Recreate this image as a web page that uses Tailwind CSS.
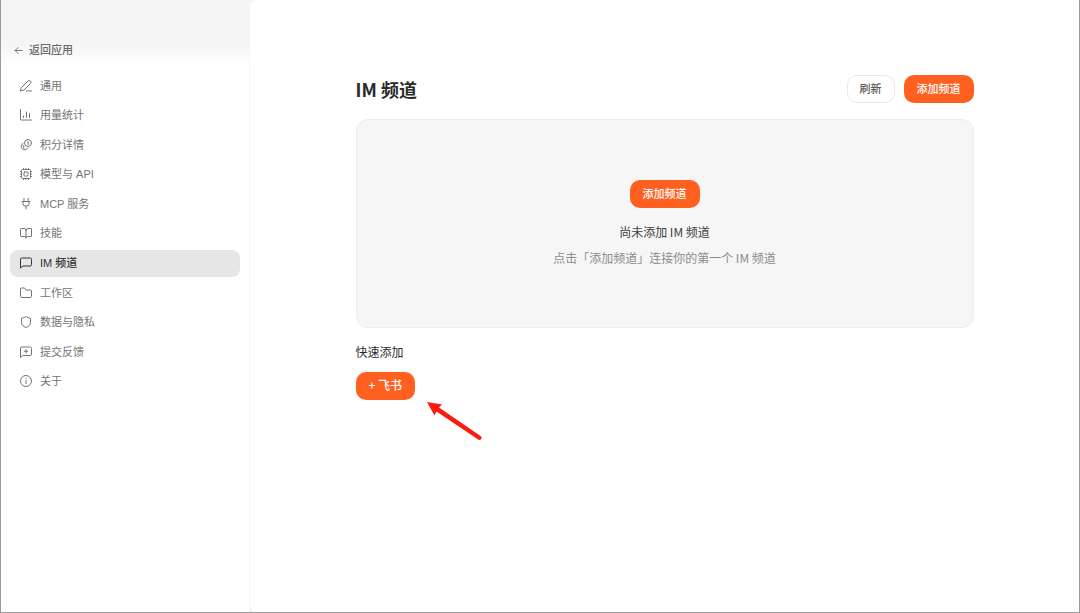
<!DOCTYPE html>
<html lang="zh-CN">
<head>
    <meta charset="UTF-8">
    <meta name="viewport" content="width=device-width, initial-scale=1.0">
    <title>IM 频道</title>
    <script src="https://cdn.jsdelivr.net/npm/@tailwindcss/browser@4"></script>
</head>
<body class="font-['Noto_Sans_CJK_SC',sans-serif] text-[#2b2b2b]">
    <div class="flex min-h-screen border-x border-b border-[#9b9b9b] bg-[#f5f5f5]">
        <aside class="w-[248px] shrink-0 bg-white bg-linear-to-b from-[#f5f5f5] from-[44px] to-white to-[66px] px-[9px] pt-10 font-['Liberation_Sans','Noto_Sans_CJK_SC',sans-serif] text-[11px] leading-4 text-[#757575]">
            <a href="#" class="flex h-5 items-center gap-1.5 pl-1 font-medium text-[#6b6b6b]">
                <svg class="size-[9px]" viewBox="0 0 24 24" fill="none" stroke="currentColor" stroke-width="2.4" stroke-linecap="round" stroke-linejoin="round"><path d="M22 12H3M11 4l-8 8 8 8"/></svg>
                返回应用
            </a>

            <nav class="mt-3 flex h-[323px] flex-col justify-between">
                <a href="#" class="flex h-[27px] items-center gap-2 rounded-lg px-2.5">
                    <svg class="size-3" viewBox="0 0 24 24" fill="none" stroke="currentColor" stroke-width="2" stroke-linecap="round" stroke-linejoin="round"><path d="M3 15 16 2a3.500 3.500 0 0 1 5 5L8 20l-7 2zM13 22h10"/></svg>
                    通用
                </a>
                <a href="#" class="flex h-[27px] items-center gap-2 rounded-lg px-2.5">
                    <svg class="size-3" viewBox="0 0 24 24" fill="none" stroke="currentColor" stroke-width="2" stroke-linecap="round" stroke-linejoin="round"><path d="M1 1v20a1 1 0 0 0 1 1h21M7 17v-3M13 17V6M19 17v-8"/></svg>
                    用量统计
                </a>
                <a href="#" class="flex h-[27px] items-center gap-2 rounded-lg px-2.5">
                    <svg class="size-3" viewBox="0 0 24 24" fill="none" stroke="currentColor" stroke-width="2" stroke-linecap="round" stroke-linejoin="round"><circle cx="16" cy="8" r="7"/><path d="M6 8.500A7 7 0 1 0 15.500 18M15 6h1.500v5M6 13.500h1.500v5"/></svg>
                    积分详情
                </a>
                <a href="#" class="flex h-[27px] items-center gap-2 rounded-lg px-2.5">
                    <svg class="size-3" viewBox="0 0 24 24" fill="none" stroke="currentColor" stroke-width="2" stroke-linecap="round" stroke-linejoin="round"><rect x="3" y="3" width="18" height="18" rx="2"/><rect x="8" y="8" width="8" height="8" rx="1"/><path d="M7 1v2M12 1v2M17 1v2M7 21v2M12 21v2M17 21v2M1 7h2M1 12h2M1 17h2M21 7h2M21 12h2M21 17h2"/></svg>
                    模型与 API
                </a>
                <a href="#" class="flex h-[27px] items-center gap-2 rounded-lg px-2.5">
                    <svg class="size-3" viewBox="0 0 24 24" fill="none" stroke="currentColor" stroke-width="2" stroke-linecap="round" stroke-linejoin="round"><path d="M8 1v6M16 1v6M4 7h16M6 7v5a4 4 0 0 0 4 4h4a4 4 0 0 0 4-4V7M12 16v6"/></svg>
                    MCP 服务
                </a>
                <a href="#" class="flex h-[27px] items-center gap-2 rounded-lg px-2.5">
                    <svg class="size-3" viewBox="0 0 24 24" fill="none" stroke="currentColor" stroke-width="2" stroke-linecap="round" stroke-linejoin="round"><path d="M12 6v16M1 4a1 1 0 0 1 1-1h6a4 4 0 0 1 4 4 4 4 0 0 1 4-4h6a1 1 0 0 1 1 1v14a1 1 0 0 1-1 1h-7a3 3 0 0 0-3 3 3 3 0 0 0-3-3H2a1 1 0 0 1-1-1z"/></svg>
                    技能
                </a>
                <a href="#" aria-current="page" class="flex h-[27px] items-center gap-2 rounded-lg bg-[#e6e6e6] px-2.5 font-medium text-[#333]">
                    <svg class="size-3" viewBox="0 0 24 24" fill="none" stroke="currentColor" stroke-width="2" stroke-linecap="round" stroke-linejoin="round"><path d="M23 16a2 2 0 0 1-2 2H6l-5 4V4a2 2 0 0 1 2-2h18a2 2 0 0 1 2 2z"/></svg>
                    IM 频道
                </a>
                <a href="#" class="flex h-[27px] items-center gap-2 rounded-lg px-2.5">
                    <svg class="size-3" viewBox="0 0 24 24" fill="none" stroke="currentColor" stroke-width="2" stroke-linecap="round" stroke-linejoin="round"><path d="M21 21a2 2 0 0 0 2-2V8a2 2 0 0 0-2-2h-9l-3-4H3a2 2 0 0 0-2 2v15a2 2 0 0 0 2 2z"/></svg>
                    工作区
                </a>
                <a href="#" class="flex h-[27px] items-center gap-2 rounded-lg px-2.5">
                    <svg class="size-3" viewBox="0 0 24 24" fill="none" stroke="currentColor" stroke-width="2" stroke-linecap="round" stroke-linejoin="round"><path d="M21 13c0 5-3.500 8-9 10-5.500-2-9-5-9-10V5a1 1 0 0 1 1-1c2.500 0 5-1 7-2.500a2 2 0 0 1 2 0C15 3 17.500 4 20 4a1 1 0 0 1 1 1z"/></svg>
                    数据与隐私
                </a>
                <a href="#" class="flex h-[27px] items-center gap-2 rounded-lg px-2.5">
                    <svg class="size-3" viewBox="0 0 24 24" fill="none" stroke="currentColor" stroke-width="2" stroke-linecap="round" stroke-linejoin="round"><path d="M23 17a2 2 0 0 1-2 2H6l-5 4V4a2 2 0 0 1 2-2h18a2 2 0 0 1 2 2zM12 7v7M8.500 10.500h7"/></svg>
                    提交反馈
                </a>
                <a href="#" class="flex h-[27px] items-center gap-2 rounded-lg px-2.5">
                    <svg class="size-3" viewBox="0 0 24 24" fill="none" stroke="currentColor" stroke-width="2" stroke-linecap="round" stroke-linejoin="round"><circle cx="12" cy="12" r="11"/><path d="M12 17v-6M12 7h.01"/></svg>
                    关于
                </a>
            </nav>
        </aside>

        <main class="min-w-0 flex-1 rounded-l-lg border-l border-[#f5f5f5] bg-white px-6 pt-[75px]">
            <div class="mx-auto max-w-[618px]">
                <div class="flex items-center justify-between">
                    <h1 class="text-lg leading-7 font-bold">IM 频道</h1>
                    <div class="flex gap-[9px] text-[11px] leading-4 font-medium">
                        <button class="h-7 rounded-[10px] border border-[#e9e9e9] bg-white px-3 pb-0.5 text-[#5a5a5a]">刷新</button>
                        <button class="h-7 rounded-[10px] bg-[#ff5f1f] px-[13px] pb-0.5 text-white">添加频道</button>
                    </div>
                </div>

                <section class="mt-4 flex h-[209px] flex-col items-center rounded-xl border border-[#ededed] bg-[#f6f6f6] pt-[60px] text-xs leading-4">
                    <button class="h-7 rounded-[10px] bg-[#ff5f1f] px-[13px] pb-0.5 text-[11px] font-medium text-white">添加频道</button>
                    <p class="mt-4 text-[#404040]">尚未添加 IM 频道</p>
                    <p class="mt-2.5 text-[#8c8c8c]">点击「添加频道」连接你的第一个 IM 频道</p>
                </section>

                <section class="mt-4 text-xs leading-4">
                    <h2>快速添加</h2>
                    <div class="relative mt-3 w-fit">
                        <button class="block h-7 rounded-[10px] bg-[#ff5f1f] px-[13px] pb-0.5 font-medium text-white">+ 飞书</button>
                        <svg class="absolute top-7 left-[70px] h-11 w-14" viewBox="0 0 56 44" fill="#fb1a0c"><path d="M1 2 16 4.500 13 7.500 54.500 36a2 2 0 0 1-2.300 3.600L10.500 11.500 8.500 15.500z"/></svg>
                    </div>
                </section>
            </div>
        </main>
    </div>
</body>
</html>
